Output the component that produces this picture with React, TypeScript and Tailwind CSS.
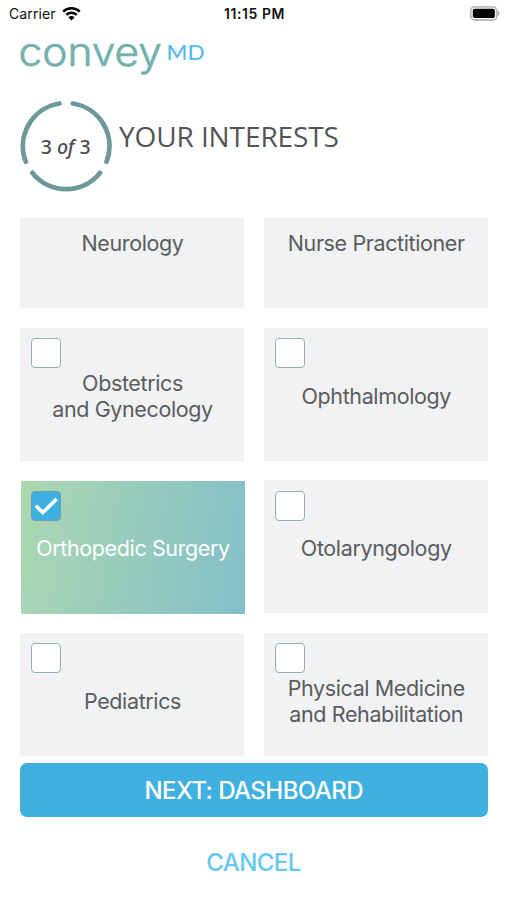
type CardProps = { lines: string[]; checked?: boolean };

function Card({ lines, checked = false }: CardProps) {
  return (
    <div
      className={
        checked
          ? "relative left-[1px] top-[1px] flex h-[133px] items-center justify-center bg-linear-100 from-[#acd7b1] to-[#82bfc7] text-white"
          : "relative flex h-[133px] items-center justify-center bg-[#f0f2f4] text-[#5b5c5e]"
      }
    >
      <span
        className={
          checked
            ? "absolute left-[10px] top-[10px] flex size-[30px] items-center justify-center rounded-[4px] border border-[#6c9fae] bg-[#3dafe0]"
            : "absolute left-[11px] top-[10.4px] size-[30px] rounded-[4px] border-[1.5px] border-[#8fb2b0] bg-white"
        }
      >
        {checked && (
          <svg viewBox="0 0 28 28" className="size-7 shrink-0" fill="none" stroke="#fff" strokeWidth="3.6">
            <path d="M3.8 13.8 10.8 20.6 24.6 7" />
          </svg>
        )}
      </span>
      <p
        className={
          checked
            ? "text-center text-[21.5px] leading-[26px] tracking-[-0.38px]"
            : "pl-[1px] pt-[3px] text-center text-[21.5px] leading-[26px] tracking-[-0.38px]"
        }
      >
        {lines.map((line) => (
          <span key={line} className="block whitespace-nowrap">
            {line}
          </span>
        ))}
      </p>
    </div>
  );
}

const specialties: CardProps[] = [
  { lines: ["Neurology"] },
  { lines: ["Nurse Practitioner"] },
  { lines: ["Obstetrics", "and Gynecology"] },
  { lines: ["Ophthalmology"] },
  { lines: ["Orthopedic Surgery"], checked: true },
  { lines: ["Otolaryngology"] },
  { lines: ["Pediatrics"] },
  { lines: ["Physical Medicine", "and Rehabilitation"] },
];

function StatusBar() {
  return (
    <header className="grid h-7 grid-cols-3 items-center pl-[9px] pr-[7px] text-[14px] text-[#111]">
      <div className="flex items-center gap-[6px] pb-[2px]">
        <span className="tracking-[0.1px]">Carrier</span>
        <svg width="19" height="15" viewBox="0 0 19 15" fill="none" stroke="#000" strokeWidth="2.4">
          <path d="M1.2 5.6a11.8 11.8 0 0 1 16.6 0" />
          <path d="M4.3 8.9a7.4 7.4 0 0 1 10.4 0" />
          <path d="M9.5 14.4 6.4 11.3a4.4 4.4 0 0 1 6.2 0Z" fill="#000" stroke="none" />
        </svg>
      </div>
      <span className="pb-[2px] text-center font-semibold tracking-[0.55px]">11:15 PM</span>
      <svg className="mb-[2px] justify-self-end" width="31" height="15" viewBox="0 0 31 15">
        <rect x="1.8" y="0.8" width="26" height="13.2" rx="4" fill="#fff" stroke="#bcbcbc" strokeWidth="1.8" />
        <rect x="3.8" y="2.7" width="22" height="9.4" rx="1.8" fill="#000" />
        <path d="M29.2 5.2q1.6 2.2 0 4.4Z" fill="#aaa" stroke="#aaa" />
      </svg>
    </header>
  );
}

function Logo() {
  return (
    <svg className="block overflow-visible" width="507" height="60" viewBox="0 28 507 60">
      <text
        x="18.5"
        y="66.3"
        fontFamily="Inter"
        fontWeight="300"
        fontSize="39.5"
        textLength="143.5"
        lengthAdjust="spacingAndGlyphs"
        fill="#73b1ad"
        stroke="#73b1ad"
        strokeWidth="0.7"
        strokeLinejoin="round"
      >
        convey
      </text>
      <text x="166.5" y="60.3" fontFamily="Lato" fontSize="20.3" textLength="38" lengthAdjust="spacingAndGlyphs" fill="#55baf0" stroke="#55baf0" strokeWidth="0.15">
        MD
      </text>
    </svg>
  );
}

function StepHeading() {
  return (
    <section className="flex h-[130px] pl-5 pt-3">
      <div className="grid h-[92px] w-[92px] shrink-0 place-items-center">
        <svg
          className="col-start-1 row-start-1"
          width="92"
          height="92"
          viewBox="20 100 92 92"
          fill="none"
          stroke="#6f9998"
          strokeWidth="4.8"
          strokeLinecap="round"
        >
          <path d="M59.5 103.5A43.2 43.2 0 0 0 25.8 161.7" />
          <path d="M72.9 103.5A43.2 43.2 0 0 1 106.6 161.7" />
          <path d="M32.3 172.8A43.2 43.2 0 0 0 100.1 172.8" />
        </svg>
        <span className="col-start-1 row-start-1 pr-[1px] pt-[2px] font-['Noto_Sans'] text-[19.5px] font-medium leading-none tracking-[-0.4px] text-[#4d4d4f] [word-spacing:0.8px]">
          3 <em>of</em> 3
        </span>
      </div>
      <h1 className="whitespace-nowrap pl-[7px] pt-[17px] font-['Open_Sans'] text-[28px] leading-[38px] tracking-[-0.1px] text-[#555557]">
        YOUR INTERESTS
      </h1>
    </section>
  );
}

export default function App() {
  return (
    <div className="flex h-[900px] w-[507px] flex-col overflow-hidden bg-white font-['Inter',sans-serif]">
      <StatusBar />
      <Logo />
      <StepHeading />
      <main className="h-[538px] shrink-0 overflow-hidden px-5">
        <div className="-mt-[43px] grid grid-cols-[224px_223.5px] gap-x-5 gap-y-[19.6px]">
          {specialties.map((item) => (
            <Card key={item.lines[0]} {...item} />
          ))}
        </div>
      </main>
      <footer className="flex flex-col px-5 pt-[7px]">
        <button className="h-[54px] w-[467.5px] rounded-[7px] bg-[#3fb0df] pt-[2px] text-[24px] font-medium tracking-[-0.55px] text-white">
          NEXT: DASHBOARD
        </button>
        <button className="mt-[28px] h-9 text-[24px] font-medium tracking-[-0.6px] text-[#66c8f1]">
          CANCEL
        </button>
      </footer>
    </div>
  );
}
